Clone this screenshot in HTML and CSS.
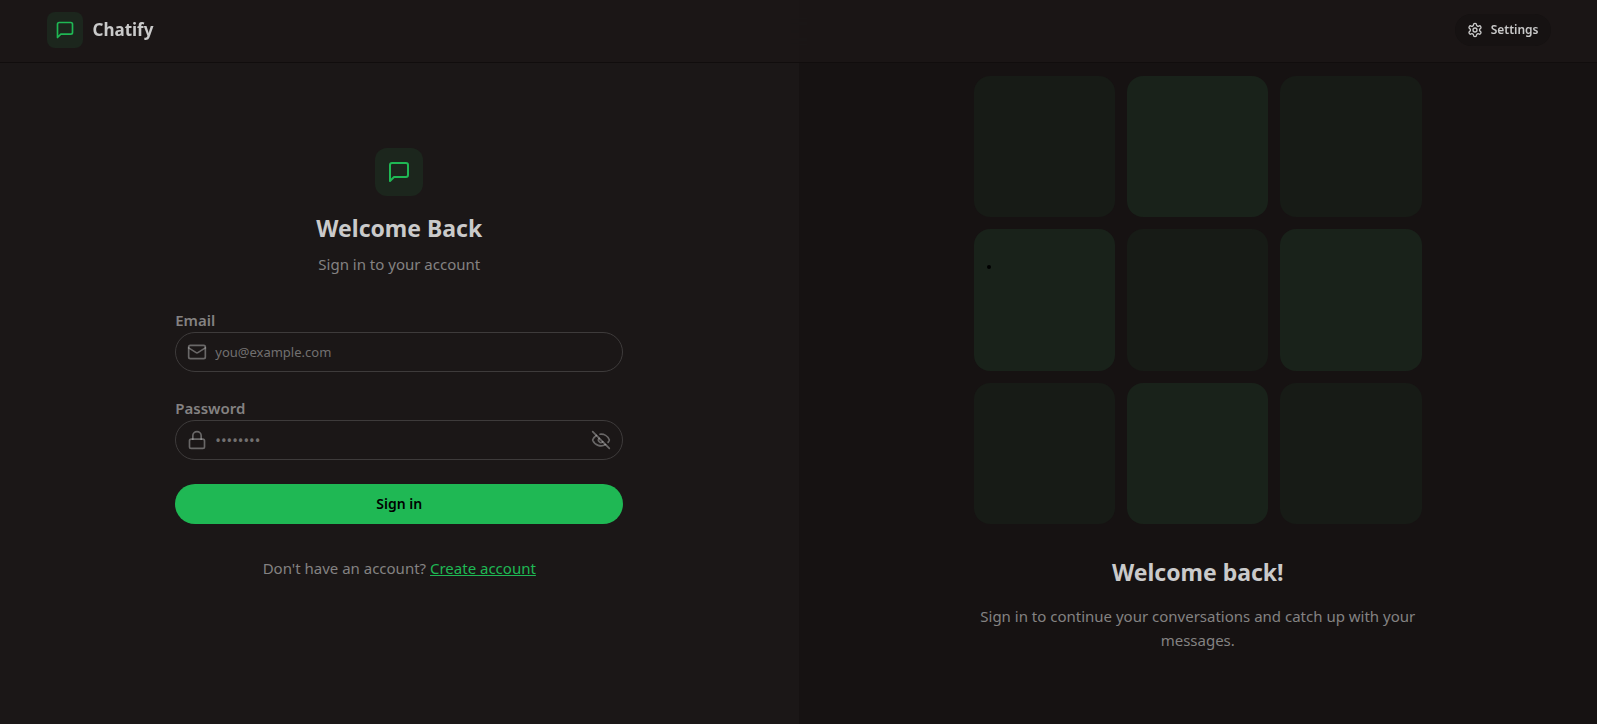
FILE: index.html
```html
<!DOCTYPE html>
<html lang="en">
<head>
<meta charset="utf-8">
<meta name="viewport" content="width=device-width, initial-scale=1">
<title>Chatify</title>
<link rel="stylesheet" href="styles.css">
</head>
<body>
<header class="topbar">
  <div class="topbar-inner">
    <a class="brand" href="#">
      <span class="brand-tile"><svg class="icon" viewBox="0 0 24 24" aria-hidden="true"><path d="M21 15a2 2 0 0 1-2 2H7l-4 4V5a2 2 0 0 1 2-2h14a2 2 0 0 1 2 2z"/></svg></span>
      <span class="brand-name">Chatify</span>
    </a>
    <a class="settings" href="#">
      <svg class="icon icon-sm" viewBox="0 0 24 24" aria-hidden="true"><path d="M12.22 2h-.44a2 2 0 0 0-2 2v.18a2 2 0 0 1-1 1.73l-.43.25a2 2 0 0 1-2 0l-.15-.08a2 2 0 0 0-2.73.73l-.22.38a2 2 0 0 0 .73 2.73l.15.1a2 2 0 0 1 1 1.72v.51a2 2 0 0 1-1 1.74l-.15.09a2 2 0 0 0-.73 2.73l.22.38a2 2 0 0 0 2.73.73l.15-.08a2 2 0 0 1 2 0l.43.25a2 2 0 0 1 1 1.73V20a2 2 0 0 0 2 2h.44a2 2 0 0 0 2-2v-.18a2 2 0 0 1 1-1.73l.43-.25a2 2 0 0 1 2 0l.15.08a2 2 0 0 0 2.73-.73l.22-.39a2 2 0 0 0-.73-2.73l-.15-.08a2 2 0 0 1-1-1.74v-.5a2 2 0 0 1 1-1.74l.15-.09a2 2 0 0 0 .73-2.73l-.22-.38a2 2 0 0 0-2.73-.73l-.15.08a2 2 0 0 1-2 0l-.43-.25a2 2 0 0 1-1-1.73V4a2 2 0 0 0-2-2z"/><circle cx="12" cy="12" r="3"/></svg>
      <span>Settings</span>
    </a>
  </div>
</header>
<main class="page">
  <section class="pane pane-form">
    <div class="content">
      <div class="intro">
        <span class="intro-tile"><svg class="icon icon-lg" viewBox="0 0 24 24" aria-hidden="true"><path d="M21 15a2 2 0 0 1-2 2H7l-4 4V5a2 2 0 0 1 2-2h14a2 2 0 0 1 2 2z"/></svg></span>
        <h1 class="title">Welcome Back</h1>
        <p class="muted">Sign in to your account</p>
      </div>
      <form class="form">
        <div class="field">
          <label class="label" for="email">Email</label>
          <div class="control">
            <svg class="icon" viewBox="0 0 24 24" aria-hidden="true"><rect width="20" height="16" x="2" y="4" rx="2"/><path d="m22 7-8.97 5.7a1.94 1.94 0 0 1-2.06 0L2 7"/></svg>
            <input class="input" id="email" type="email" placeholder="you@example.com">
          </div>
        </div>
        <div class="field">
          <label class="label" for="password">Password</label>
          <div class="control">
            <svg class="icon" viewBox="0 0 24 24" aria-hidden="true"><rect width="18" height="11" x="3" y="11" rx="2" ry="2"/><path d="M7 11V7a5 5 0 0 1 10 0v4"/></svg>
            <input class="input input-password" id="password" type="password" placeholder="••••••••">
            <button class="reveal" type="button" aria-label="Show password"><svg class="icon" viewBox="0 0 24 24" aria-hidden="true"><path d="M10.733 5.076a10.744 10.744 0 0 1 11.205 6.575 1 1 0 0 1 0 .696 10.747 10.747 0 0 1-1.444 2.49"/><path d="M14.084 14.158a3 3 0 0 1-4.242-4.242"/><path d="M17.479 17.499a10.75 10.75 0 0 1-15.417-5.151 1 1 0 0 1 0-.696 10.75 10.75 0 0 1 4.446-5.143"/><path d="m2 2 20 20"/></svg></button>
          </div>
        </div>
        <button class="submit" type="submit">Sign in</button>
      </form>
      <p class="muted signup">Don't have an account? <a class="link" href="#">Create account</a></p>
    </div>
  </section>
  <section class="pane pane-pattern">
    <div class="content">
      <div class="pattern">
        <div class="cell"></div><div class="cell cell-lit"></div><div class="cell"></div>
        <div class="cell cell-lit"><span class="speck"></span></div><div class="cell"></div><div class="cell cell-lit"></div>
        <div class="cell"></div><div class="cell cell-lit"></div><div class="cell"></div>
      </div>
      <h2 class="title">Welcome back!</h2>
      <p class="muted blurb">Sign in to continue your conversations and catch up with your messages.</p>
    </div>
  </section>
</main>
</body>
</html>
```
FILE: styles.css
```css
:root {
  --base: #1b1717;
  --base-dim: #161212;
  --edge: #110d0d;
  --text: #cacaca;
  --muted: #848282;
  --faint: #727070;
  --primary: #1fb854;
}

* { box-sizing: border-box; }

body {
  margin: 0;
  background: var(--base);
  color: var(--text);
  font-family: "Segoe UI", "Noto Sans", sans-serif;
  font-size: 15px;
  line-height: 24px;
}

h1, h2, p { margin: 0; }

a { color: inherit; text-decoration: none; }

.icon {
  display: block;
  flex: none;
  width: 20px;
  height: 20px;
  fill: none;
  stroke: currentColor;
  stroke-width: 2;
  stroke-linecap: round;
  stroke-linejoin: round;
}
.icon-sm { width: 16px; height: 16px; }
.icon-lg { width: 24px; height: 24px; }

.topbar {
  position: fixed;
  inset: 0 0 auto;
  z-index: 10;
  border-bottom: 1px solid var(--edge);
  background: rgb(27 23 23 / 80%);
  backdrop-filter: blur(16px);
}
.topbar-inner {
  display: flex;
  align-items: center;
  justify-content: space-between;
  max-width: 1536px;
  margin: 0 auto;
  padding: 12px 16px 14px;
}
.brand { display: flex; align-items: center; gap: 10px; }
.brand-tile {
  display: grid;
  place-items: center;
  width: 36px;
  height: 36px;
  border-radius: 8px;
  background: #1c261d;
  color: var(--primary);
}
.brand-name { font-size: 17px; font-weight: 700; }
.settings {
  display: flex;
  align-items: center;
  gap: 8px;
  height: 32px;
  padding: 0 12px;
  border-radius: 16px;
  background: var(--base-dim);
  font-size: 12px;
  font-weight: 600;
}

.page {
  display: grid;
  grid-template-columns: 1fr 1fr;
  min-height: 100vh;
}
.pane {
  display: flex;
  align-items: center;
  justify-content: center;
  padding: 76px 48px 72px;
}
.pane-pattern { background: var(--base-dim); text-align: center; }
.content { width: 100%; max-width: 448px; }

.intro {
  display: flex;
  flex-direction: column;
  align-items: center;
  gap: 8px;
  margin-bottom: 32px;
}
.intro-tile {
  display: grid;
  place-items: center;
  width: 48px;
  height: 48px;
  margin-bottom: 8px;
  border-radius: 12px;
  background: #1c261d;
  color: var(--primary);
}
.title { font-size: 23px; font-weight: 700; line-height: 32px; }
.muted { color: var(--muted); }

.form { display: flex; flex-direction: column; gap: 24px; }
.label { display: block; color: var(--muted); font-weight: 600; }
.control {
  display: flex;
  align-items: center;
  gap: 8px;
  height: 40px;
  padding: 0 11px;
  border: 1px solid #3e3b3b;
  border-radius: 20px;
}
.control .icon { stroke: rgb(202 202 202 / 45%); }
.input {
  flex: 1;
  min-width: 0;
  padding: 0;
  border: 0;
  outline: 0;
  background: none;
  color: var(--text);
  font: inherit;
  font-size: 13px;
}
.input-password { font-size: 15px; }
.input::placeholder { color: var(--faint); opacity: 1; }
.reveal {
  padding: 0;
  border: 0;
  background: none;
  color: inherit;
}
.submit {
  height: 40px;
  border: 0;
  border-radius: 20px;
  background: var(--primary);
  color: #000;
  font: inherit;
  font-size: 14px;
  font-weight: 600;
}
.signup { margin-top: 32px; text-align: center; }
.link { color: var(--primary); text-decoration: underline; }

.pattern {
  display: grid;
  grid-template-columns: repeat(3, 1fr);
  gap: 12px;
  margin-bottom: 32px;
}
.cell {
  position: relative;
  aspect-ratio: 1;
  border-radius: 16px;
  background: #171b16;
}
.cell-lit { background: #19221a; }
.speck {
  position: absolute;
  top: 36px;
  left: 13px;
  width: 4px;
  height: 4px;
  border-radius: 50%;
  background: #000;
}
.blurb { margin-top: 16px; }

@media (max-width: 1023px) {
  .page { grid-template-columns: 1fr; }
  .pane-pattern { display: none; }
}
```
